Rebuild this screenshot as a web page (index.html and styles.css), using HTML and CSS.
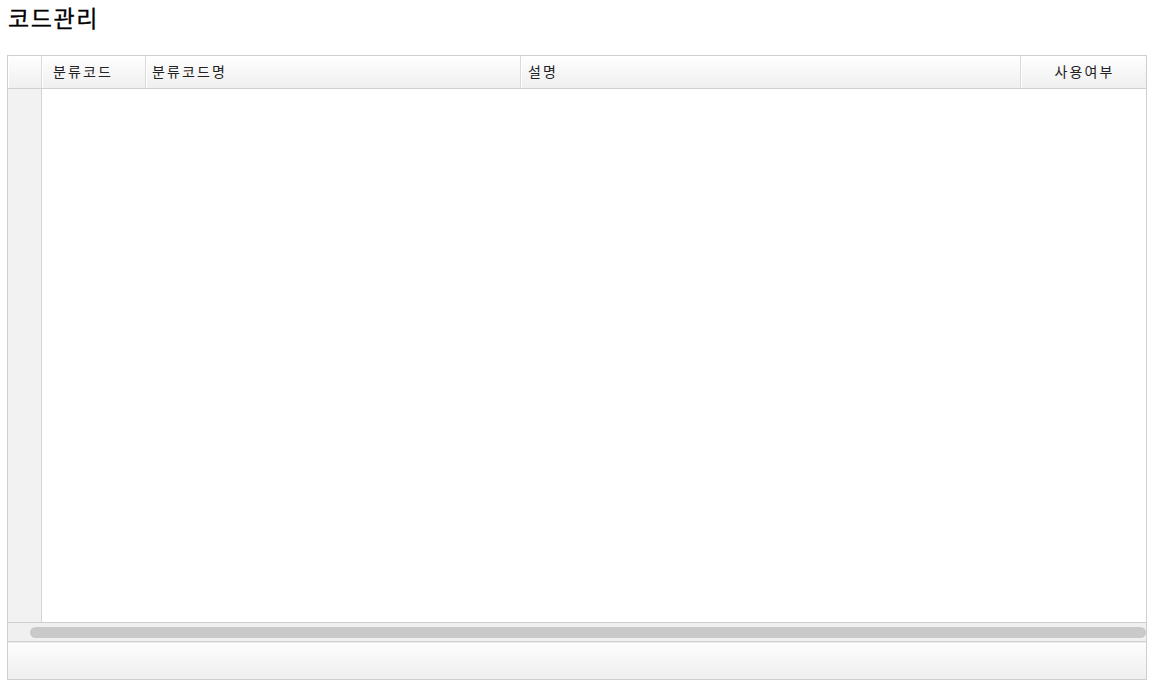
FILE: index.html
```html
<!DOCTYPE html>
<html lang="ko">
<head>
<meta charset="utf-8">
<title>코드관리</title>
<link rel="stylesheet" href="styles.css">
</head>
<body>
<h1 class="page-title">코드관리</h1>
<div class="grid">
  <div class="grid-head">
    <div class="cell rownum"></div>
    <div class="cell col-code">분류코드</div>
    <div class="cell col-name">분류코드명</div>
    <div class="cell col-desc">설명</div>
    <div class="cell col-use">사용여부</div>
  </div>
  <div class="grid-body">
    <div class="rownum-col"></div>
    <div class="data-area"></div>
  </div>
  <div class="hscroll">
    <div class="thumb"></div>
  </div>
  <div class="grid-foot"></div>
</div>
</body>
</html>
```

FILE: styles.css
```css
html, body {
  margin: 0;
  padding: 0;
  background: #fff;
}
body {
  padding: 0 0 0 7px;
  font-family: "Noto Sans CJK KR", "Noto Sans", sans-serif;
  color: #000;
}
.page-title {
  margin: 0;
  padding: 2px 0 0 1px;
  height: 55px;
  box-sizing: border-box;
  font-size: 23px;
  font-weight: 400;
  line-height: 30px;
  letter-spacing: 1.6px;
  -webkit-text-stroke: 0.3px #000;
}
.grid {
  width: 1140px;
  box-sizing: border-box;
  border: 1px solid #cfcfcf;
  display: flex;
  flex-direction: column;
}
.grid-head {
  display: flex;
  height: 33px;
  box-sizing: border-box;
  border-bottom: 1px solid #d0d0d0;
  background: linear-gradient(#ffffff, #efefef);
  font-size: 14px;
  letter-spacing: 2.1px;
  color: #222;
}
.cell {
  box-sizing: border-box;
  line-height: 31px;
  border-right: 1px solid #dadada;
  box-shadow: inset 1px 0 0 #fff;
  white-space: nowrap;
}
.rownum { width: 34px; }
.col-code { width: 104px; padding-left: 11px; }
.col-name { width: 375px; padding-left: 6px; }
.col-desc { width: 500px; padding-left: 7px; }
.col-use { width: 125px; text-align: center; border-right: 0; padding-left: 2px; }
.grid-body {
  display: flex;
  height: 533px;
  border-bottom: 1px solid #cfcfcf;
}
.rownum-col {
  width: 33px;
  background: #f2f2f2;
  border-right: 1px solid #d4d4d4;
}
.data-area {
  flex: 1;
  background: #fff;
}
.hscroll {
  height: 19px;
  box-sizing: border-box;
  background: #f0f0f0;
  border-bottom: 1px solid #cfcfcf;
  padding: 4px 0 0 22px;
}
.thumb {
  height: 11px;
  border-radius: 6px;
  background: #c9c9c9;
}
.grid-foot {
  height: 37px;
  background: linear-gradient(#fdfdfd, #efefef);
  border-top: 1px solid #ececec;
  box-sizing: border-box;
}
```
